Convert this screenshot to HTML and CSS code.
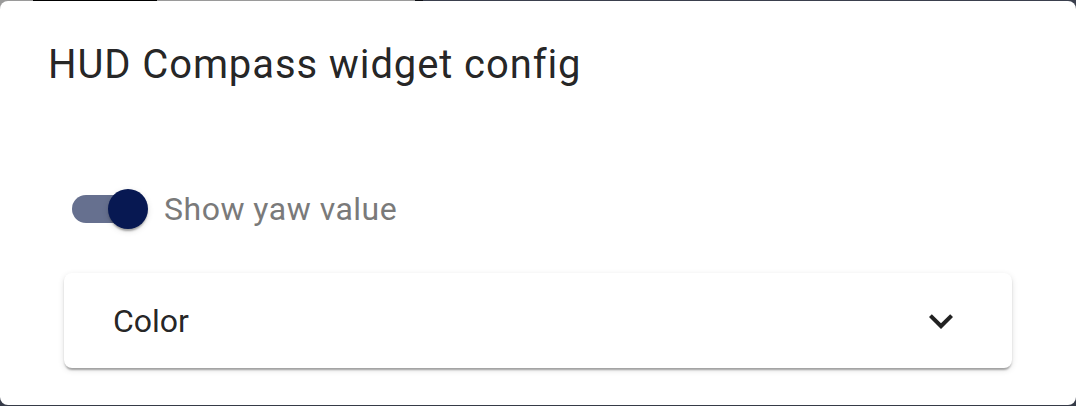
FILE: index.html
```html
<!DOCTYPE html>
<html>
<head>
<meta charset="utf-8">
<link rel="stylesheet" href="styles.css">
</head>
<body>
<div class="dialog">
  <h2 class="dialog-title">HUD Compass widget config</h2>
  <div class="dialog-content">
    <label class="switch-row">
      <span class="switch">
        <span class="track"></span>
        <span class="thumb"></span>
      </span>
      <span class="switch-label">Show yaw value</span>
    </label>
    <div class="accordion">
      <div class="summary">
        <span class="summary-text">Color</span>
        <span class="expand-icon">
          <svg viewBox="0 0 24 24" width="48" height="48"><path d="M16.59 8.59 12 13.17 7.41 8.59 6 10l6 6 6-6z" fill="#222"/></svg>
        </span>
      </div>
    </div>
  </div>
</div>
</body>
</html>
```

FILE: styles.css
```css
html, body {
  margin: 0;
  padding: 0;
}
body {
  width: 1076px;
  height: 406px;
  overflow: hidden;
  background:
    linear-gradient(to right, #9a9a9a 0 33px, #000 33px 157px, #9a9a9a 157px 415px, #0d0f14 415px 423px, #3a3f4d 423px) top left / 100% 8px no-repeat,
    #363b48;
  font-family: Roboto, "Liberation Sans", sans-serif;
}
.dialog {
  margin-top: 1px;
  height: 404px;
  background: #fff;
  border-radius: 8px;
  box-sizing: border-box;
  display: flex;
  flex-direction: column;
}
.dialog-title {
  margin: 0;
  padding: 32px 48px;
  font-size: 40px;
  line-height: 64px;
  font-weight: 400;
  color: rgba(0, 0, 0, 0.87);
  letter-spacing: 0.9px;
}
.dialog-content {
  padding: 42px 48px 0;
  display: flex;
  flex-direction: column;
}
.switch-row {
  display: flex;
  align-items: center;
}
.switch {
  position: relative;
  width: 116px;
  height: 76px;
  flex: none;
}
.track {
  position: absolute;
  left: 24px;
  top: 24px;
  width: 68px;
  height: 28px;
  border-radius: 14px;
  background: #66708f;
}
.thumb {
  position: absolute;
  left: 60px;
  top: 18px;
  width: 40px;
  height: 40px;
  border-radius: 50%;
  background: #071852;
  box-shadow: 0 4px 2px -2px rgba(0,0,0,0.2), 0 2px 2px 0 rgba(0,0,0,0.14), 0 2px 6px 0 rgba(0,0,0,0.12);
}
.switch-label {
  font-size: 32px;
  line-height: 48px;
  color: #7a7a7a;
  letter-spacing: 0.5px;
}
.accordion {
  margin: 26px 16px 0;
  background: #fff;
  border-radius: 8px;
  box-shadow: 0 4px 2px -2px rgba(0,0,0,0.2), 0 2px 2px 0 rgba(0,0,0,0.14), 0 2px 6px 0 rgba(0,0,0,0.12);
}
.summary {
  height: 95px;
  padding: 0 47px 0 49px;
  display: flex;
  align-items: center;
  justify-content: space-between;
}
.summary-text {
  font-size: 32px;
  line-height: 48px;
  color: rgba(0, 0, 0, 0.87);
  letter-spacing: 0;
}
.expand-icon {
  display: flex;
  width: 48px;
  height: 48px;
}
```
